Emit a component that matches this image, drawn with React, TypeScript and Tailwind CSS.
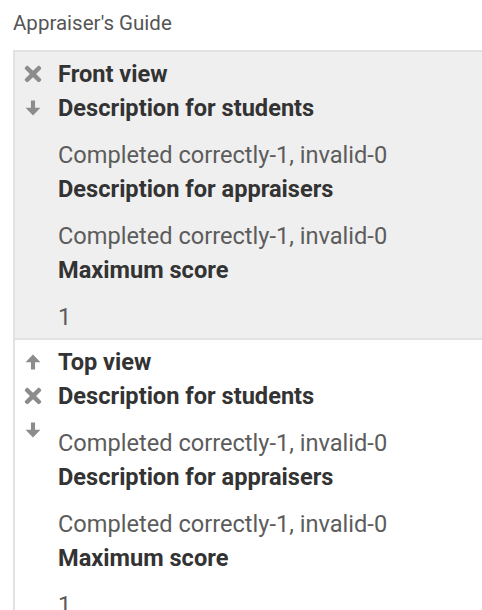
import React from 'react'
import { FaTimes } from 'react-icons/fa'

type Control = 'up' | 'remove' | 'down'

interface Field {
  label: string
  value: string
}

interface GuideItem {
  title: string
  controls: Control[]
  fields: Field[]
  active?: boolean
}

const items: GuideItem[] = [
  {
    title: 'Front view',
    controls: ['remove', 'down'],
    active: true,
    fields: [
      { label: 'Description for students', value: 'Completed correctly-1, invalid-0' },
      { label: 'Description for appraisers', value: 'Completed correctly-1, invalid-0' },
      { label: 'Maximum score', value: '1' },
    ],
  },
  {
    title: 'Top view',
    controls: ['up', 'remove', 'down'],
    fields: [
      { label: 'Description for students', value: 'Completed correctly-1, invalid-0' },
      { label: 'Description for appraisers', value: 'Completed correctly-1, invalid-0' },
      { label: 'Maximum score', value: '1' },
    ],
  },
]

// heavy block arrow, pointing down; flipped for "up"
const Arrow = ({ up }: { up?: boolean }) => (
  <svg
    width="16"
    height="16"
    viewBox="0 0 14 14"
    fill="currentColor"
    className={up ? 'rotate-180' : ''}
  >
    <path d="M5.2 0.5h3.6v6.3h4.7L7 13.5 0.5 6.8h4.7z" />
  </svg>
)

const ControlButton = ({ type }: { type: Control }) => (
  <button className="flex h-[34px] w-[36px] items-center justify-center text-[#8c8c8c]">
    {type === 'remove' && <FaTimes size={24} />}
    {type === 'down' && <Arrow />}
    {type === 'up' && <Arrow up />}
  </button>
)

const GuideRow = ({ item }: { item: GuideItem }) => (
  <div
    className={`flex border-b-2 border-[#e2e2e2] pt-[5px] pb-[4px] ${
      item.active ? 'bg-[#efefef]' : 'bg-white'
    }`}
  >
    <div className="flex w-[43px] shrink-0 flex-col">
      {item.controls.map(c => (
        <ControlButton key={c} type={c} />
      ))}
    </div>
    <div className="min-w-0 flex-1 text-[23.6px] leading-[34px]">
      <div className="font-bold text-[#333]">{item.title}</div>
      {item.fields.map(f => (
        <div key={f.label}>
          <div className="font-bold text-[#333]">{f.label}</div>
          <div className="mt-[13px] text-[#5c5c5c]">{f.value}</div>
        </div>
      ))}
    </div>
  </div>
)

export default function App() {
  return (
    <div
      className="h-[610px] w-[482px] overflow-hidden bg-white pl-[13px] pt-[9px]"
      style={{ fontFamily: 'Roboto, "Liberation Sans", sans-serif' }}
    >
      <div className="mb-[13px] text-[20.5px] leading-[28px] text-[#555]">Appraiser's Guide</div>
      <div className="border-l-2 border-t-2 border-[#e2e2e2]">
        {items.map(item => (
          <GuideRow key={item.title} item={item} />
        ))}
      </div>
    </div>
  )
}
